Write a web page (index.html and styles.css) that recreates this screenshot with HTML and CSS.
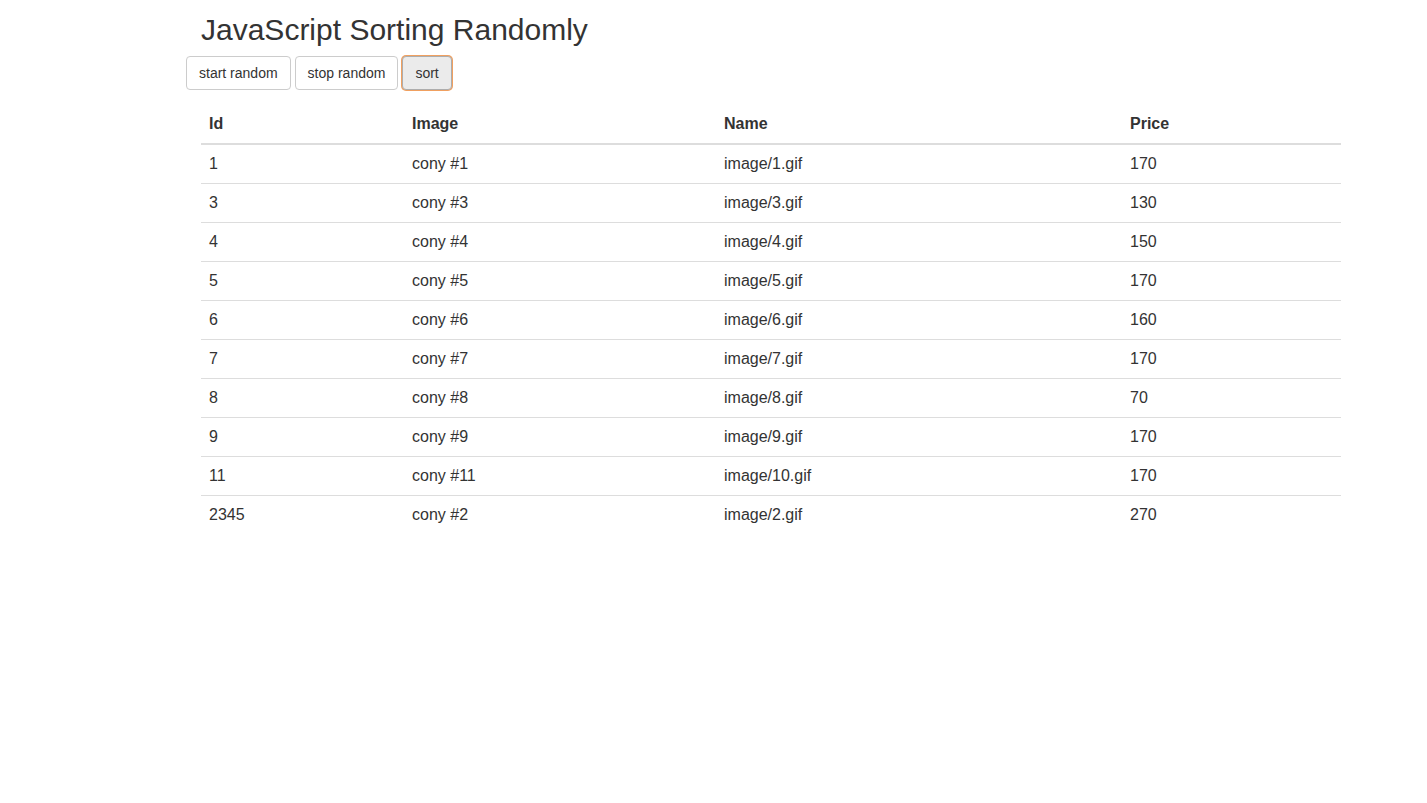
FILE: index.html
```html
<!DOCTYPE html>
<html>
<head>
<meta charset="utf-8">
<link rel="stylesheet" href="styles.css">
</head>
<body>
<div class="container">
  <h2 class="title">JavaScript Sorting Randomly</h2>
  <div class="toolbar">
    <button class="btn">start random</button>
    <button class="btn">stop random</button>
    <button class="btn btn-focus">sort</button>
  </div>
  <table class="table">
    <colgroup>
      <col class="c1"><col class="c2"><col class="c3"><col class="c4">
    </colgroup>
    <thead>
      <tr><th>Id</th><th>Image</th><th>Name</th><th>Price</th></tr>
    </thead>
    <tbody>
      <tr><td>1</td><td>cony #1</td><td>image/1.gif</td><td>170</td></tr>
      <tr><td>3</td><td>cony #3</td><td>image/3.gif</td><td>130</td></tr>
      <tr><td>4</td><td>cony #4</td><td>image/4.gif</td><td>150</td></tr>
      <tr><td>5</td><td>cony #5</td><td>image/5.gif</td><td>170</td></tr>
      <tr><td>6</td><td>cony #6</td><td>image/6.gif</td><td>160</td></tr>
      <tr><td>7</td><td>cony #7</td><td>image/7.gif</td><td>170</td></tr>
      <tr><td>8</td><td>cony #8</td><td>image/8.gif</td><td>70</td></tr>
      <tr><td>9</td><td>cony #9</td><td>image/9.gif</td><td>170</td></tr>
      <tr><td>11</td><td>cony #11</td><td>image/10.gif</td><td>170</td></tr>
      <tr><td>2345</td><td>cony #2</td><td>image/2.gif</td><td>270</td></tr>
    </tbody>
  </table>
</div>
</body>
</html>
```
FILE: styles.css
```css
html, body {
  margin: 0;
  padding: 0;
  background: #fff;
}
body {
  font-family: "Liberation Sans", Arial, sans-serif;
  color: #333;
  font-size: 16px;
}
.container {
  margin-left: 186px;
  width: 1170px;
}
.title {
  margin: 13px 0 0 15px;
  font-size: 30px;
  font-weight: 500;
  line-height: 33px;
  color: #333;
}
.toolbar {
  display: flex;
  gap: 4px;
  margin-top: 10px;
}
.btn {
  font-family: "Liberation Sans", Arial, sans-serif;
  font-size: 14px;
  line-height: 20px;
  padding: 6px 12px;
  border: 1px solid #ccc;
  border-radius: 4px;
  background: #fff;
  color: #333;
  cursor: pointer;
}
.btn-focus {
  background: #ebebeb;
  border: 1px solid #adadad;
  box-shadow: 0 0 0 1px #f0a060;
}
.table {
  margin: 15px 0 0 15px;
  width: 1140px;
  border-collapse: collapse;
  border-spacing: 0;
}
.c1 { width: 203px; }
.c2 { width: 312px; }
.c3 { width: 406px; }
.c4 { width: 219px; }
.table th {
  text-align: left;
  font-weight: bold;
  padding: 8px;
  line-height: 22px;
  border-bottom: 2px solid #ddd;
}
.table td {
  padding: 8px;
  line-height: 22px;
  border-top: 1px solid #ddd;
}
.table tbody tr:first-child td {
  border-top: 0;
}
```
